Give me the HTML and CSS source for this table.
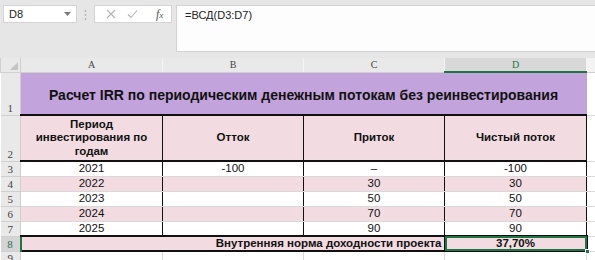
FILE: index.html
```html
<!DOCTYPE html>
<html lang="ru">
<head>
<meta charset="utf-8">
<title>IRR</title>
<link rel="stylesheet" href="styles.css">
</head>
<body>
<div class="app">
  <div class="toolbar">
    <div class="namebox">
      <span class="nb-text">D8</span>
      <svg class="nb-arrow" width="7" height="4" viewBox="0 0 7 4"><path d="M0 0H7L3.5 4Z" fill="#7a7a7a"/></svg>
    </div>
    <svg class="dots" width="3" height="10" viewBox="0 0 3 10"><circle cx="1.5" cy="1" r="0.8" fill="#9a9a9a"/><circle cx="1.5" cy="5" r="0.8" fill="#9a9a9a"/><circle cx="1.5" cy="9" r="0.8" fill="#9a9a9a"/></svg>
    <div class="fbtns">
      <svg class="ico" width="10" height="10" viewBox="0 0 10 10"><path d="M1 1L9 9M9 1L1 9" stroke="#b4b4b4" stroke-width="1.1" fill="none"/></svg>
      <svg class="ico" width="11" height="10" viewBox="0 0 11 10"><path d="M1 5.5L4 8.5L10 1.5" stroke="#b4b4b4" stroke-width="1.1" fill="none"/></svg>
      <span class="fx">f<span class="fx-x">x</span></span>
    </div>
    <div class="formula">=ВСД(D3:D7)</div>
  </div>
  <table class="sheet">
    <colgroup>
      <col class="c-rh"><col class="c-a"><col class="c-b"><col class="c-c"><col class="c-d"><col class="c-e">
    </colgroup>
    <tr class="r-head">
      <td class="corner"><svg class="tri" width="8" height="8" viewBox="0 0 8 8"><path d="M8 0V8H0Z" fill="#c4c4c4"/></svg></td>
      <td class="ch">A</td><td class="ch">B</td><td class="ch">C</td><td class="ch ch-sel">D</td><td class="ch ch-e"></td>
    </tr>
    <tr class="r1">
      <td class="rh">1</td>
      <td class="title" colspan="4">Расчет IRR по периодическим денежным потокам без реинвестирования</td>
      <td class="e"></td>
    </tr>
    <tr class="r2">
      <td class="rh">2</td>
      <td class="hd">Период<br>инвестирования по<br>годам</td>
      <td class="hd">Отток</td>
      <td class="hd">Приток</td>
      <td class="hd">Чистый поток</td>
      <td class="e"></td>
    </tr>
    <tr class="rd">
      <td class="rh">3</td><td class="v">2021</td><td class="v">-100</td><td class="v">–</td><td class="v">-100</td><td class="e"></td>
    </tr>
    <tr class="rd pink">
      <td class="rh">4</td><td class="v">2022</td><td class="v"></td><td class="v">30</td><td class="v">30</td><td class="e"></td>
    </tr>
    <tr class="rd">
      <td class="rh">5</td><td class="v">2023</td><td class="v"></td><td class="v">50</td><td class="v">50</td><td class="e"></td>
    </tr>
    <tr class="rd pink">
      <td class="rh">6</td><td class="v">2024</td><td class="v"></td><td class="v">70</td><td class="v">70</td><td class="e"></td>
    </tr>
    <tr class="rd last">
      <td class="rh">7</td><td class="v">2025</td><td class="v"></td><td class="v">90</td><td class="v">90</td><td class="e"></td>
    </tr>
    <tr class="r8">
      <td class="rh rh-sel">8</td>
      <td class="irr-label" colspan="3">Внутренняя норма доходности проекта</td>
      <td class="irr-val"><span class="sel-box"></span>37,70%<span class="handle"></span></td>
      <td class="e"></td>
    </tr>
    <tr class="r9">
      <td class="rh">9</td><td class="g"></td><td class="g"></td><td class="g"></td><td class="g"></td><td class="e"></td>
    </tr>
  </table>
</div>
</body>
</html>
```
FILE: styles.css
```css
* { box-sizing: border-box; }
html, body { margin: 0; padding: 0; background: #ffffff; }
body { width: 595px; height: 260px; overflow: hidden; font-family: "Liberation Sans", Arial, sans-serif; }

.app { width: 595px; }

.toolbar {
  background: #e6e6e6;
  height: 58px;
  display: flex;
  align-items: flex-start;
  padding: 5px 0 0 3px;
}
.namebox {
  width: 74px;
  height: 18px;
  background: #ffffff;
  border: 1px solid #d4d4d4;
  display: flex;
  align-items: center;
  justify-content: space-between;
  padding: 0 5px 0 5px;
  font-size: 11px;
  color: #222;
}
.nb-arrow { margin-top: -1px; }
.dots { margin: 5px 0 0 7px; }
.fbtns {
  margin-left: 7px;
  width: 78px;
  height: 18px;
  background: #ffffff;
  border: 1px solid #d4d4d4;
  display: flex;
  align-items: center;
  padding-left: 11px;
  gap: 11px;
}
.fx {
  margin-left: 7px;
  font-family: "Liberation Serif", serif;
  font-style: italic;
  font-size: 12px;
  color: #555;
}
.fx-x { font-size: 9px; }
.formula {
  margin-left: 4px;
  flex: 1;
  height: 47px;
  background: #fdfdfd;
  border: 1px solid #d2d2d2;
  border-right: none;
  padding: 3px 0 0 8px;
  font-size: 11px;
  color: #222;
}

.sheet {
  border-collapse: collapse;
  table-layout: fixed;
  width: 595px;
}
.c-rh { width: 20px; }
.c-a { width: 142px; }
.c-b { width: 141px; }
.c-c { width: 141px; }
.c-d { width: 142px; }
.c-e { width: 9px; }

.sheet td {
  padding: 0;
  border: 1px solid #d9d9d9;
  text-align: center;
  vertical-align: middle;
  overflow: hidden;
  white-space: nowrap;
}

.r-head td { height: 14px; background: #e9e9e9; border-color: #d0d0d0; border-top: none; }
.corner { position: relative; border-left: none; }
.tri { position: absolute; right: 2px; bottom: 2px; }
.ch {
  font-family: "Liberation Serif", serif;
  font-size: 10px;
  color: #444;
  line-height: 12px;
  border-right-color: #f4f4f4 !important;
}
.sheet .ch-sel { background: #d8d8d8; color: #217346; border-bottom: 2px solid #217346; }
.sheet .ch-e { background: #f3f3f3; border-right: none; }

.sheet .rh {
  background: #e9e9e9;
  border-color: #cfcfcf;
  border-left: none;
  font-family: "Liberation Serif", serif;
  font-size: 11px;
  color: #444;
  vertical-align: bottom;
  line-height: 13px;
}
.sheet .rh-sel { background: #d4d4d4; color: #217346; border-right: 2px solid #217346; }

.sheet .e { border-right: none; }

.r1 td { height: 43px; }
.sheet .title {
  background: #c2a3dc;
  border-color: #c2a3dc;
  border-bottom: 2px solid #111;
  font-weight: bold;
  font-size: 14px;
  color: #111;
  padding-top: 3px;
}

.r2 td { height: 46px; }
.sheet .hd {
  background: #f2dce2;
  border: 1px solid #111;
  border-top: 2px solid #111;
  border-bottom: 2px solid #111;
  font-weight: bold;
  font-size: 11.5px;
  line-height: 13.5px;
  color: #111;
  vertical-align: middle;
}

.rd td { height: 15px; }
.sheet .v {
  border-left: 1px solid #111;
  border-right: 1px solid #111;
  font-size: 11.5px;
  line-height: 13px;
  color: #111;
}
.pink .v { background: #f2dce2; }
.sheet .last .v { border-bottom: 2px solid #111; }

.r8 td { height: 15px; }
.sheet .irr-label {
  background: #f2dce2;
  border: 2px solid #111;
  text-align: right;
  font-weight: bold;
  font-size: 11.5px;
  line-height: 13px;
  color: #111;
  padding-right: 2px;
}
.sheet .irr-val {
  position: relative;
  background: #f2dce2;
  border: 2px solid #111;
  font-weight: bold;
  font-size: 11.5px;
  line-height: 13px;
  color: #111;
  overflow: visible;
}
.sel-box {
  position: absolute;
  left: -1px;
  top: -1px;
  right: -1px;
  bottom: -1px;
  border: 2px solid #217346;
}
.handle {
  position: absolute;
  right: -4px;
  bottom: -4px;
  width: 5px;
  height: 5px;
  background: #217346;
  border: 1px solid #ffffff;
}

.r9 td { height: 14px; }
```
